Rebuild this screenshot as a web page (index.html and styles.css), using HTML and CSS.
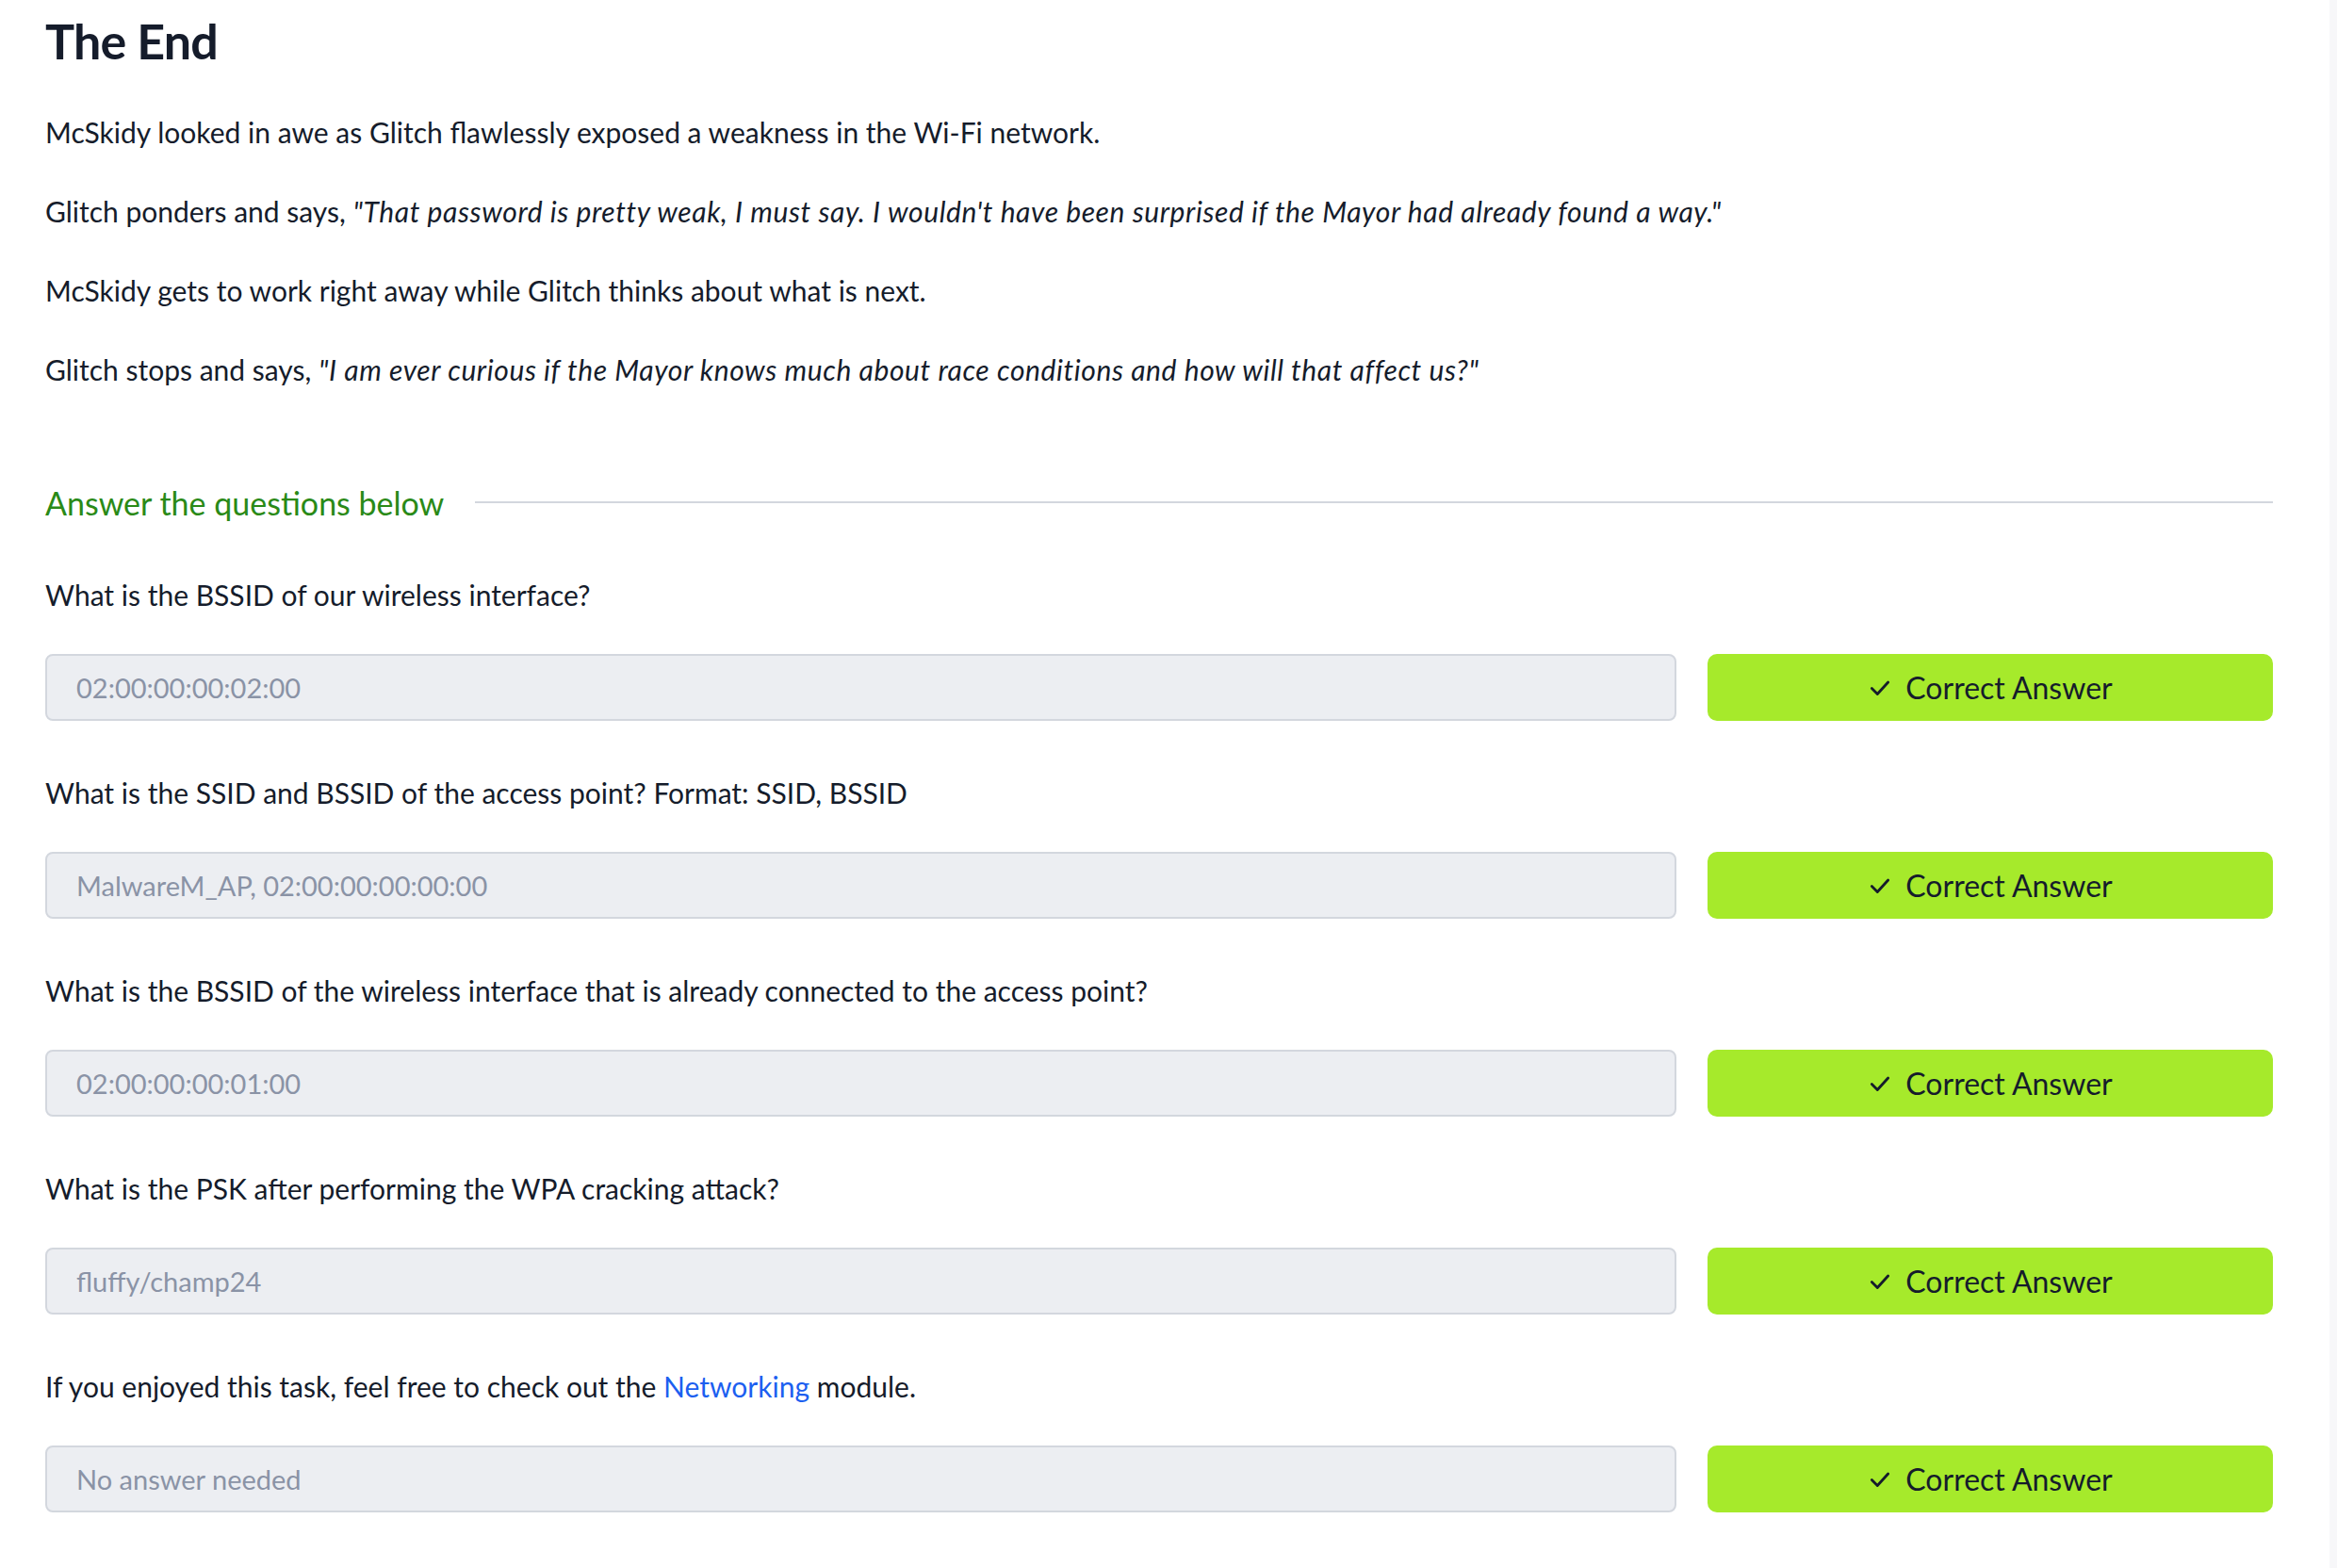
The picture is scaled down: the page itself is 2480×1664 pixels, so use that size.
FILE: index.html
```html
<!DOCTYPE html>
<html lang="en">
<head>
<meta charset="utf-8">
<title>The End</title>
<link rel="stylesheet" href="styles.css">
</head>
<body>
<div class="page">
  <main class="content">
    <h1 class="title">The End</h1>
    <p class="para">McSkidy looked in awe as Glitch flawlessly exposed a weakness in the Wi-Fi network.</p>
    <p class="para">Glitch ponders and says, <em>"That password is pretty weak, I must say. I wouldn't have been surprised if the Mayor had already found a way."</em></p>
    <p class="para">McSkidy gets to work right away while Glitch thinks about what is next.</p>
    <p class="para">Glitch stops and says, <em>"I am ever curious if the Mayor knows much about race conditions and how will that affect us?"</em></p>

    <div class="section-head">
      <h2 class="section-title">Answer the questions below</h2>
      <div class="section-rule"></div>
    </div>

    <div class="question">
      <p class="q-text">What is the BSSID of our wireless interface?</p>
      <div class="answer-row">
        <div class="answer-field">02:00:00:00:02:00</div>
        <button class="answer-btn"><svg class="check" viewBox="0 0 24 24"><polyline points="4,12.5 9.5,18 20,6.5"/></svg><span>Correct Answer</span></button>
      </div>
    </div>

    <div class="question">
      <p class="q-text">What is the SSID and BSSID of the access point? Format: SSID, BSSID</p>
      <div class="answer-row">
        <div class="answer-field">MalwareM_AP, 02:00:00:00:00:00</div>
        <button class="answer-btn"><svg class="check" viewBox="0 0 24 24"><polyline points="4,12.5 9.5,18 20,6.5"/></svg><span>Correct Answer</span></button>
      </div>
    </div>

    <div class="question">
      <p class="q-text">What is the BSSID of the wireless interface that is already connected to the access point?</p>
      <div class="answer-row">
        <div class="answer-field">02:00:00:00:01:00</div>
        <button class="answer-btn"><svg class="check" viewBox="0 0 24 24"><polyline points="4,12.5 9.5,18 20,6.5"/></svg><span>Correct Answer</span></button>
      </div>
    </div>

    <div class="question">
      <p class="q-text">What is the PSK after performing the WPA cracking attack?</p>
      <div class="answer-row">
        <div class="answer-field">fluffy/champ24</div>
        <button class="answer-btn"><svg class="check" viewBox="0 0 24 24"><polyline points="4,12.5 9.5,18 20,6.5"/></svg><span>Correct Answer</span></button>
      </div>
    </div>

    <div class="question">
      <p class="q-text">If you enjoyed this task, feel free to check out the <a class="link" href="#">Networking</a> module.</p>
      <div class="answer-row">
        <div class="answer-field">No answer needed</div>
        <button class="answer-btn"><svg class="check" viewBox="0 0 24 24"><polyline points="4,12.5 9.5,18 20,6.5"/></svg><span>Correct Answer</span></button>
      </div>
    </div>
  </main>
  <div class="scroll-track"></div>
</div>
</body>
</html>
```

FILE: styles.css
```css
* { box-sizing: border-box; }

html, body {
  margin: 0;
  padding: 0;
  background: #ffffff;
}

body {
  font-family: Lato, "Noto Sans", "Liberation Sans", sans-serif;
  color: #151c2b;
}

.page {
  display: flex;
  min-height: 1664px;
}

.content {
  flex: 1;
  padding: 8px 60px 40px 48px;
}

.scroll-track {
  width: 8px;
  background: #f7f7f9;
  flex: none;
}

.title {
  margin: 0 0 38px 0;
  font-size: 52px;
  line-height: 70px;
  font-weight: 700;
  letter-spacing: -0.8px;
  color: #151c2b;
}

.para {
  margin: 0 0 36px 0;
  font-size: 30px;
  line-height: 48px;
}

.para em {
  font-style: italic;
  letter-spacing: 0.6px;
}

.section-head {
  display: flex;
  align-items: center;
  gap: 33px;
  margin-top: 89px;
  height: 56px;
}

.section-title {
  margin: 0;
  font-size: 34px;
  font-weight: 400;
  color: #2a8a17;
  white-space: nowrap;
}

.section-rule {
  flex: 1;
  height: 2px;
  background: #d3d7de;
}

.question {
  margin-top: 46px;
}

.question + .question {
  margin-top: 52px;
}

.q-text {
  margin: 0 0 39px 0;
  font-size: 30px;
  line-height: 48px;
}

.link {
  color: #1c5ff0;
  text-decoration: none;
}

.answer-row {
  display: flex;
  gap: 33px;
}

.answer-field {
  flex: 1;
  height: 71px;
  background: #eceef2;
  border: 2px solid #d3d7de;
  border-radius: 8px;
  padding: 0 31px;
  display: flex;
  align-items: center;
  font-size: 29px;
  color: #8a93a6;
}

.answer-btn {
  width: 600px;
  height: 71px;
  flex: none;
  border: none;
  border-radius: 10px;
  background: #a6ea2b;
  color: #151c2b;
  font-family: Lato, "Noto Sans", sans-serif;
  font-size: 32px;
  display: flex;
  align-items: center;
  justify-content: center;
  gap: 14px;
  padding: 0;
}

.check {
  width: 26px;
  height: 26px;
  fill: none;
  stroke: #151c2b;
  stroke-width: 2.6;
  stroke-linecap: round;
  stroke-linejoin: round;
}
```
